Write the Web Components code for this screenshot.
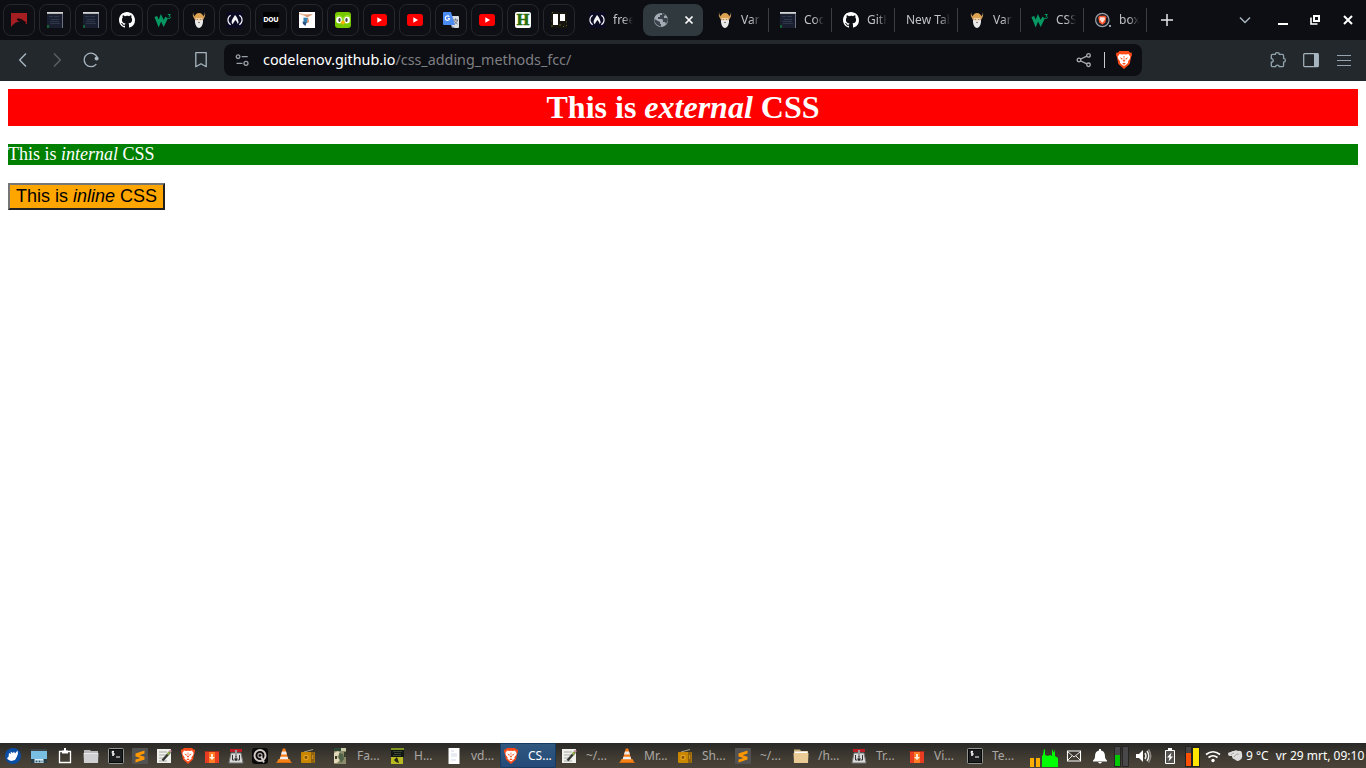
<!DOCTYPE html>
<html lang="en">
<head>
<meta charset="utf-8">
<title>CSS adding methods</title>
<style>html,body{margin:0;height:100%;overflow:hidden;background:#fff}</style>
</head>
<body>
<desktop-screen></desktop-screen>
<script>
const terminal = '<rect x=".5" y=".5" width="15" height="15" rx="1" fill="#1b1d1e" stroke="#909492"/><rect x="1.5" y="1.5" width="13" height="13" fill="none" stroke="#060707"/><path d="M6 3.5H4.2V5.2H6V7H4M5 2.8V8M8 9h4" stroke="#fff" fill="none"/>';
const shield = '<path d="M4 0h8l1.5 1.6 1.4-.2L15 4l-.6 1L13 11.5 8 16 3 11.500 1.600 5 1 4l.1-2.600 1.400.2z" fill="#fb4b19"/><path d="M4.100 2.600l2.200.5L8 2.800l1.700.3 2.200-.5 1.700 2.400-.4 1.900-1.800 2.400.3 1.200L9.800 12.300 8 13.400 6.200 12.300l-1.900-1.800.3-1.200-1.800-2.400L2.400 5z" fill="#fff"/><path d="M4.200 5.600l2.500 1-.4 1.300zM11.800 5.600l-2.500 1 .4 1.300zM7.600 4.500h.8l-.2 3.300 1.100.9-1.300.9-1.300-.9 1.100-.9zM6.300 11.200L8 10.400l1.700.8L8 12.200z" fill="#fb4b19"/>';
const ICONS = {
 flag:'<path d="M0 1h16v11h-1C13.500 9 9 7.800 5.500 7.200L10 6.500C5 6 4.500 8 9 9.500 5 9.500 2 12.500 0 15z" fill="#a41e22"/><path d="M6 7.300l4 .4 5 3.300" stroke="#16080c" stroke-width="1.300" fill="none"/>',
 code:'<path d="M0 0h16v16H0z" fill="#1a1f30"/><path d="M0 .9h16" stroke="#d5d5d5" stroke-width="1.800"/><path d="M15.500 2v14" stroke="#6c7283"/><path d="M2 4.500h4m1 0h5M4 7.500h8M3 9.500h9M3 11.500h10" stroke="#343c52" stroke-width=".8"/><path d="M0 13h2v3H0z" fill="#175d32"/>',
 github:'<path fill="#fff" d="M8 0C3.58 0 0 3.58 0 8c0 3.54 2.29 6.53 5.47 7.59.4.07.55-.17.55-.38 0-.19-.01-.82-.01-1.49-2.01.37-2.53-.49-2.69-.94-.09-.23-.48-.94-.82-1.13-.28-.15-.68-.52-.01-.53.63-.01 1.08.58 1.23.82.72 1.21 1.87.87 2.33.66.07-.52.28-.87.51-1.07-1.78-.2-3.64-.89-3.64-3.95 0-.87.31-1.59.82-2.15-.08-.2-.36-1.02.08-2.12 0 0 .67-.21 2.2.82A7.6 7.6 0 018 3.86c.68 0 1.36.09 2 .27 1.53-1.04 2.2-.82 2.2-.82.44 1.1.16 1.92.08 2.12.51.56.82 1.27.82 2.15 0 3.07-1.87 3.75-3.65 3.95.29.25.54.73.54 1.48 0 1.07-.01 1.93-.01 2.2 0 .21.15.46.55.38A8 8 0 0016 8c0-4.42-3.58-8-8-8"/>',
 w3:'<path d="M.8 4.5L3.700 11.500 6 5.800 8.700 11.500 11.600 5.500" fill="none" stroke="#059862" stroke-width="3"/><path d="M12.800 2.500h2.500L14 4.300c2 0 2 2.200.4 2.200l-1.500-.4" fill="none" stroke="#059862"/>',
 goat:'<path d="M2.300 0C2 2.500 3 4 4.500 4.500L4 8 2.600 5.500C1.500 4 1.800 1.500 2.300 0zM13.700 0C14 2.500 13 4 11.500 4.500L12 8l1.400-2.500C14.500 4 14.200 1.500 13.700 0z" fill="#c99a5c"/><path d="M3.500 5Q4.500 1 8 1t4.500 4l-.3 1.500H3.800z" fill="#dda152"/><path d="M4.200 6h7.600v3H4.200z" fill="#f1cfa0"/><path d="M4 8l2.500.5h3L12 8c.3 4-1.500 8-4 8s-4.300-4-4-8z" fill="#e9e9ea"/><path d="M5.800 7.500h1m2.400 0h1M7 10.500h2" stroke="#6d605b" stroke-width=".8"/>',
 fcc:'<path d="M0 0h16v16H0z" fill="#0a0a23"/><path d="M3.700 3.200C0 5.500 0 10.500 3.700 12.800M12.300 3.200C16 5.500 16 10.500 12.300 12.800" fill="none" stroke="#ededf2" stroke-width="1.200"/><path d="M8 3c2 2 3 4 3.700 7.500L10.500 12c0-2-1-3-2.400-4-.6 2-1.600 2-2.300 4.200C3 10 6 6.500 8 3z" fill="#f4f4f7"/>',
 dou:'<path d="M0 0h16v16H0z"/><text x="8" y="10.400" text-anchor="middle" font-family="Inter" font-size="6.800" font-weight="800" fill="#fff">DOU</text>',
 person:'<path d="M0 0h16v16H0z" fill="#fff"/><path d="M1 2l5 .5L14 2l-3 2-3 1.500-2-1.500z" fill="#db9b76"/><path d="M4.500 5.500L9 6l-1 5-3.500-.5z" fill="#3683b5"/><path d="M3.500 9.500l4 1-1 3.500-2.500-2z" fill="#294e7e"/><path d="M9 5l1 5-2 1z" fill="#cf8152"/><path d="M0 1.500l7 1.500" stroke="#efb78d"/>',
 duo:'<rect width="16" height="16" rx="3" fill="#78c800"/><path d="M1 4q4-3 7 2 3-5 7-2v6q-4 4-7 0-3 4-7 0z" fill="#9be32c"/><ellipse cx="4" cy="8" rx="2.800" ry="3.200" fill="#fff"/><ellipse cx="12" cy="8" rx="2.800" ry="3.200" fill="#fff"/><ellipse cx="4.500" cy="8" rx="1.200" ry="1.900" fill="#454545"/><ellipse cx="11.500" cy="8" rx="1.200" ry="1.900" fill="#454545"/><path d="M5.500 10L8 8.500l2.500 1.500L8 13z" fill="#ffb300"/>',
 youtube:'<rect y="2" width="16" height="12" rx="2.700" fill="#f00"/><path d="M6.300 5.200v5.600L11 8z" fill="#fff"/>',
 translate:'<path d="M6 4h9q1 0 1 1v10q0 1-1 1H9z" fill="#d8dce3"/><path d="M9 14l3 2h-3z" fill="#777f91"/><path d="M1 0h7l4 13H1q-1 0-1-1V1q0-1 1-1z" fill="#4b8bf5"/><path d="M6.400 4.700C5.200 3.300 2.300 3.800 2.300 6.300S6.300 9.300 6.600 6.500H4.800" fill="none" stroke="#fff" stroke-width="1.200"/><path d="M10 8h5m-2.500-1.500V8m2 0c-.5 2-2 3.500-3 4m0-3c.5 1.300 1.700 2.400 3 3" stroke="#626b7d" fill="none" stroke-width=".9"/>',
 H:'<rect width="16" height="16" rx="2" fill="#fff"/><text x="8" y="13.300" text-anchor="middle" font-family="Liberation Serif" font-size="16" font-weight="700" fill="#296b0e" stroke="#296b0e" stroke-width=".7">H</text>',
 trello:'<path d="M0 0h16v16H0z" fill="#17150e"/><path d="M1 .5h1m10 14h1m2-1h1M0 9h1m7 4h2m5-3h1M0 14h2" stroke="#55601a"/><rect x="2" y="2" width="5" height="11" fill="#fff"/><rect x="9" y="2" width="5" height="7" fill="#fff"/>',
 globe:'<circle cx="8" cy="8" r="7" fill="#a5abb5"/><path d="M9 1v2L7 3v2H5v2h4l1 1v2h2l1 2 2-4-1-2h-3V4l2-1zM1.500 7L5 9l2 1v2h1v2.500q-5-1-6.500-5z" fill="#3b444b"/>',
 boxbrave:'<circle cx="7.300" cy="8" r="6.700" fill="#171c23" stroke="#9aa1aa" stroke-width="1.200"/><path d="M4.500 3.700h5.600l1.200 1.500-.9 5.300-3.100 2.300-3.100-2.300-.9-5.300z" fill="#fb542b"/><path d="M5.100 5.300h4.400l.5 2.200-2.700 3.400-2.700-3.400z" fill="#fff" opacity=".8"/><path d="M15 13v2" stroke="#9aa1aa" stroke-width="2"/>',
 back:'<path d="M11 1.500L4.700 8 11 14.500" fill="none" stroke="#a6b5bf" stroke-width="1.400"/>',
 next:'<path d="M5 1.500L11.300 8 5 14.500" fill="none" stroke="#596167" stroke-width="1.400"/>',
 reload:'<path d="M13.300 12.100A6.800 6.800 0 1 1 14.400 5.700" fill="none" stroke="#a6b5bf" stroke-width="1.300"/><circle cx="13.600" cy="6.500" r="2" fill="#a6b5bf"/>',
 mark:'<path d="M2.800.7h10.400v14L8 11.700l-5.200 3z" fill="none" stroke="#a6b5bf" stroke-width="1.300" stroke-linejoin="round"/>',
 tune:'<g fill="none" stroke="#9ba0a8" stroke-width="1.300"><circle cx="4.100" cy="4.700" r="1.800"/><path d="M7.700 4.700h6M2.500 11.300h6"/><circle cx="12" cy="11.300" r="2"/></g>',
 share:'<g fill="none" stroke="#adafb3" stroke-width="1.300"><circle cx="3" cy="8" r="1.800"/><circle cx="12.500" cy="3.400" r="1.800"/><circle cx="12.500" cy="12.800" r="1.800"/><path d="M4.800 7l6-2.800M4.800 9l6 2.900"/></g>',
 puzzle:'<path d="M1.300 3.700q0-1.300 1.300-1.300H5.300C5.300 0 9.300 0 9.300 2.400h2.900q1.400 0 1.400 1.400v2.600c2.400 0 2.400 3.700 0 3.700v3.300q0 1.300-1.300 1.300H9.200c0-2.100-3.600-2.100-3.600 0h-3q-1.300 0-1.300-1.300v-3.200c2.600 0 2.600-3.500 0-3.500z" fill="none" stroke="#94a4ae" stroke-width="1.300"/>',
 panel:'<rect x=".7" y="1.700" width="14.600" height="13" rx="1" fill="none" stroke="#a6b5bf" stroke-width="1.200"/><path d="M11 1.500h4.500v13H11z" fill="#a6b5bf"/>',
 menu:'<path d="M1 3.500h14M1 8.500h14M1 13.500h14" stroke="#94a4ae" stroke-width="1.200"/>',
 plus:'<path d="M8 2v12M2 8h12" stroke="#e5e6e7" stroke-width="1.500"/>',
 down:'<path d="M3 5.500l5 5 5-5" fill="none" stroke="#a6b5bf" stroke-width="1.500"/>',
 min:'<path d="M3 12h10" stroke="#fff" stroke-width="2"/>',
 restore:'<path d="M7 4h5v5H7z" fill="none" stroke="#fff" stroke-width="2"/><path d="M4 5.500v6.500h6.500" fill="none" stroke="#fff" stroke-width="1.600"/>',
 close:'<path d="M4 4l8 8M12 4l-8 8" stroke="#fff" stroke-width="2"/>',
 shield, term:terminal,
 mouse:'<circle cx="8" cy="8" r="8" fill="#0a4da5"/><path d="M4 5l2 1-.5-2.500L8 5l1-1.500 1 2 2.500-3 .5 3-1 3-2 3.500-4 1-3-1.500-1-1.500 1.500-1z" fill="#fff"/>',
 desk:'<path d="M0 1h16v3H0z" fill="#3d4347"/><path d="M0 3h16v8H0z" fill="#79bfe1"/><path d="M0 11h16v4H0z" fill="#273b45"/><path d="M3.500 11h9v4h-9z" fill="#d8edf7"/><path d="M4.500 12.500h2v2h-2zm3 0h2v2h-2zm3 0h1v2h-1z" fill="#315c74"/>',
 clip:'<path d="M2.500 3.500h11v11h-11z" fill="none" stroke="#fff" stroke-width="1.300"/><path d="M5 5.500V2.500h2V0h2v2.500h2v3z" fill="#fff"/>',
 folder:'<path d="M1 2h6l1 1h7v11H1z" fill="#b9b9bc"/><path d="M0.500 5h15l-.5 10H1z" fill="#d0d0d3"/><path d="M1 5.500h14" stroke="#e8e8e9"/>',
 beige:'<path d="M1 1.500h6l1 1.500h7v11H1z" fill="#c9ac77"/><path d="M1.500 3.500h13v3h-13z" fill="#fff"/><path d="M0.500 5h15l-.5 10H1z" fill="#ebcb95"/>',
 sublime:'<rect width="16" height="16" rx="1" fill="#525252"/><path d="M3.500 5.500L12.500 2.500v3L7.500 7.300l5 1.500v2.700L3.500 14.500v-3L8.500 10l-5-1.600z" fill="#ff9800"/>',
 note:'<path d="M1 1h14v14H1z" fill="#f1f1ec"/><path d="M3 4h8M3 7h7M3 10h5M3 13h8" stroke="#a7a8a5"/><path d="M6.500 12.500L14 4" stroke="#363834" stroke-width="2.500"/><path d="M11.500 6.500L13.500 4.300" stroke="#9fc247" stroke-width="1.800"/><path d="M13.700 3.700l1.300-1.500" stroke="#c98fa5" stroke-width="2.300"/>',
 red:'<path d="M1 3h14v12H1z" fill="#e93d22"/><path d="M.5 3.500h15" stroke="#a32a1b"/><path d="M5 4h6v11H5z" fill="#ff7d27"/><path d="M8 6v5" stroke="#ffe6d3" stroke-width="2"/><path d="M5 9h6l-3 3z" fill="#fff0dd"/>',
 trans:'<path d="M2 1h12v3H2z" fill="#be1c24"/><path d="M3 5h10l2 10H1z" fill="#dadada" stroke="#777"/><path d="M8 2v7" stroke="#999" stroke-width="2"/><path d="M4.500 7v5h2m5-5v5h-2M8 8v5" fill="none" stroke="#333"/><path d="M6 10.500h4l-2 2.500z" fill="#222"/>',
 Q:'<rect width="16" height="16" rx="3" fill="#090909"/><circle cx="8" cy="7.500" r="5.500" fill="none" stroke="#d1c9c6" stroke-width="2"/><circle cx="8" cy="7.500" r="2" fill="none" stroke="#a69d9a" stroke-width="1.300"/><path d="M9 8.500l3 6" stroke="#d4cdca" stroke-width="1.800"/>',
 vlc:'<path d="M2.500 11h11l2 4H.5z" fill="#f48418"/><path d="M6.800.5h2.400L12.500 12q-4.500 2-9 0z" fill="#fa7b13"/><path d="M5.900 3.500h4.200l.8 3H5.100zM4.400 8.700h7.200l.7 2.600H3.700z" fill="#eee"/><path d="M0.500 14.500h15" stroke="#dc6b07"/>',
 radio:'<path d="M4 4l9-2.500" stroke="#aaa07e"/><rect x="1" y="4" width="14" height="11" rx="1" fill="#c98600"/><path d="M11 4h3.500v11H11z" fill="#8e6210"/><circle cx="6" cy="9.500" r="2.800" fill="#e3a021"/><circle cx="6" cy="9.500" r="1.400" fill="#825507"/><path d="M12.700 7v4" stroke="#d0972a"/>',
 fact:'<path d="M2 0h12v16H2z" fill="#8b8b6a"/><path d="M2 0h7v3H2z" fill="#2e4734"/><path d="M9 0h5v3H9z" fill="#c8cba9"/><path d="M2 5l4-2 2 2-3 4 3 3-3 3H2z" fill="#e3d9b9"/><path d="M7 5l4 1 1 5-3 4-2-5z" fill="#50644a"/><path d="M12 4h2v5h-2zM3 8h2v3H3z" fill="#39402c"/>',
 book:'<path d="M2 0h13v9H2z" fill="#101611"/><path d="M2 1h13" stroke="#a9bf26" stroke-width="1.500"/><path d="M2 9h12v7H2z" fill="#b8ba20"/><path d="M4 3.500h9M5 5.500h7M4 7.500h8" stroke="#405039" stroke-width=".8"/><path d="M8 9l2 6-3-1-2-2" fill="#252812"/>',
 paper:'<path d="M2.500 0h11v16h-11z" fill="#fff"/><path d="M5 3h3M5 6h6M5 8h6M5 12h5" stroke="#c5cee0" stroke-width=".8"/>',
 mail:'<path d="M1.500 3h13v10h-13z" fill="none" stroke="#fff" stroke-width="1.100"/><path d="M2 4l6 5 6-5M2 12l4-4m8 4l-4-4" fill="none" stroke="#fff" stroke-width=".9"/>',
 bell:'<path d="M7 1h2v1.500c3 .5 4 3 4 6 0 2 1 3 2 4v1H1v-1c1-1 2-2 2-4 0-3 1-5.500 4-6z" fill="#fff"/><path d="M6 14h4q-2 3-4 0" fill="#fff"/>',
 volume:'<path d="M0 6h3l4-4v12l-4-4H0z" fill="#fff"/><path d="M9 5q2 3 0 6m2-8q3.500 5 0 10" stroke="#eee" stroke-width="1.500" fill="none"/><path d="M12.500 1.500q4.500 6.500 0 13" stroke="#8c887f" stroke-width="1.500" fill="none"/>',
 battery:'<path d="M3.500 2.500h9v13h-9z" fill="#55534f" stroke="#fff"/><path d="M6 0h4v2H6z" fill="#fff"/><path d="M9.500 4.500L5 9.500h2.500L6.500 13.500 11 8.500H8.500z" fill="#fff"/>',
 wifi:'<path d="M1 6.500q7-5.500 14 0M3.500 9.500q4.500-3.500 9 0" stroke="#fff" stroke-width="1.600" fill="none"/><circle cx="8" cy="12.500" r="1.700" fill="#fff"/>',
 cloud:'<path d="M3 8Q1 8 1 6t3-2q1-1.500 3-1 2-1.500 4 0 4-1 4 3 1 4-2 6-3 2-5-.5Q5 11 5 8z" fill="#dedddb"/><path d="M7 9q2-4 5-3M4 7q1-2 3-2" stroke="#aaa9a5" fill="none"/>'
};
class UiIcon extends HTMLElement {
  connectedCallback(){
    this.attachShadow({mode:'open'}).innerHTML=`<style>:host{display:block;width:16px;height:16px;flex:none}svg{display:block;width:100%;height:100%;overflow:visible}</style><svg viewBox="0 0 16 16">${ICONS[this.getAttribute('name')]}</svg>`;
  }
}
customElements.define('ui-icon',UiIcon);
class PinnedTab extends HTMLElement {
  connectedCallback(){
    this.attachShadow({mode:'open'}).innerHTML=`<style>:host{box-sizing:border-box;display:grid;place-items:center;width:32px;height:32px;flex:none;border:1px solid #24272d;border-radius:8px;background:#0e0f15}</style><slot></slot>`;
  }
}
customElements.define('pinned-tab',PinnedTab);
class BrowserTab extends HTMLElement {
  connectedCallback(){
    const icon=this.getAttribute('icon');
    this.attachShadow({mode:'open'}).innerHTML=`<style>
    :host{box-sizing:border-box;position:relative;display:flex;align-items:center;gap:8px;width:63px;height:32px;flex:none;padding:0 7px 0 12px;font:12px/16px "Noto Sans",sans-serif;color:#c1c2c5}
    :host([line])::before{content:"";position:absolute;left:0;top:4px;width:1px;height:24px;background:#3a3d42}
    span{flex:1;min-width:0;overflow:hidden;white-space:nowrap;-webkit-mask:linear-gradient(90deg,#000 calc(100% - 10px),transparent)}
    :host([active]){width:60px;margin:0 2px 0 3px;padding:0 7px 0 10px;border-radius:8px;background:#30393e;gap:13px}
    :host([active]) span{display:none}</style>${icon?`<ui-icon name="${icon}"></ui-icon>`:''}<span><slot></slot></span>${this.hasAttribute('active')?'<ui-icon name="close" style="width:14px;height:14px"></ui-icon>':''}`;
  }
}
customElements.define('browser-tab',BrowserTab);
class TabStrip extends HTMLElement {
  connectedCallback(){
    const pins=['flag','code','code','github','w3','goat','fcc','dou','person','duo','youtube','youtube','translate','youtube','H','trello'];
    const tabs=[['goat','Var'],['code','Coc'],['github','GitH'],['','New Tab'],['goat','Var'],['w3','CSS'],['boxbrave','box']];
    this.attachShadow({mode:'open'}).innerHTML=`<style>:host{display:flex;align-items:center;height:40px;background:#0d0e13}.pins{display:flex;gap:4px;padding:0 2px 0 3px}.add{margin-left:12px}.controls{display:flex;margin-left:auto;padding-right:10px}.controls ui-icon{margin-left:17px}.controls ui-icon:nth-child(2){margin-left:22px}.controls ui-icon:nth-child(3){margin-left:16px}</style>
    <div class="pins">${pins.map(n=>`<pinned-tab><ui-icon name="${n}"></ui-icon></pinned-tab>`).join('')}</div>
    <browser-tab icon="fcc">free</browser-tab><browser-tab icon="globe" active></browser-tab>${tabs.map((t,i)=>`<browser-tab icon="${t[0]}" ${i?'line':''}>${t[1]}</browser-tab>`).join('')}<browser-tab line style="width:1px;padding:0"></browser-tab><ui-icon class="add" name="plus"></ui-icon>
    <div class="controls"><ui-icon name="down"></ui-icon><ui-icon name="min"></ui-icon><ui-icon name="restore"></ui-icon><ui-icon name="close"></ui-icon></div>`;
  }
}
customElements.define('tab-strip',TabStrip);
class BrowserToolbar extends HTMLElement {
  connectedCallback(){
    this.attachShadow({mode:'open'}).innerHTML=`<style>
    :host{box-sizing:border-box;display:flex;align-items:center;height:41px;padding:0 14px 1px 15px;background:#22282c}
    nav{display:flex;width:209px;gap:18px}nav ui-icon:last-child{margin-left:auto;margin-right:15px}
    .address{box-sizing:border-box;width:918px;height:32px;border-radius:8px;background:#0d0e13;display:flex;align-items:center;padding:0 10px}
    .url{font:14.33px/20px "Noto Sans",sans-serif;margin-left:13px;color:#fff;white-space:nowrap}.url span{color:#7e7f82}
    .share{margin-left:auto}.bar{width:1px;height:16px;background:#cacbcd;margin:0 11px 0 12px}.tools{display:flex;gap:17px;margin-left:auto}
    </style><nav><ui-icon name="back"></ui-icon><ui-icon name="next"></ui-icon><ui-icon name="reload"></ui-icon><ui-icon name="mark"></ui-icon></nav>
    <div class="address"><ui-icon name="tune"></ui-icon><div class="url">codelenov.github.io<span>/css_adding_methods_fcc/</span></div><ui-icon class="share" name="share"></ui-icon><i class="bar"></i><ui-icon name="shield" style="width:18px;height:18px;margin:0 -1px"></ui-icon></div>
    <div class="tools"><ui-icon name="puzzle"></ui-icon><ui-icon name="panel"></ui-icon><ui-icon name="menu"></ui-icon></div>`;
  }
}
customElements.define('browser-toolbar',BrowserToolbar);
class WebContent extends HTMLElement {
  connectedCallback(){
    this.attachShadow({mode:'open'}).innerHTML=`<style>
    :host{display:block;box-sizing:border-box;flex:1;background:#fff;padding:8px;font:16px "Liberation Serif",serif}
    h1{margin:0;background:red;color:#fff;font-size:32px;line-height:37px;text-align:center}
    p{margin:18px 0;background:green;color:#fff;font-size:18px;line-height:21px}
    button{display:block;box-sizing:border-box;width:157px;height:27px;background:orange;color:#000;font:18px "Liberation Sans",sans-serif;padding:1px 6px;border:2px solid;border-color:#767676 #212121 #212121 #767676;white-space:nowrap;line-height:21px}
    </style><h1>This is <em>external</em> CSS</h1><p>This is <em>internal</em> CSS</p><button>This is <em>inline</em> CSS</button>`;
  }
}
customElements.define('web-content',WebContent);
class TaskButton extends HTMLElement {
  connectedCallback(){
    this.attachShadow({mode:'open'}).innerHTML=`<style>:host{box-sizing:border-box;display:flex;align-items:center;gap:9px;width:58px;height:25px;padding-left:3px;font:12px/18px "Noto Sans",sans-serif;color:#aaa8a4;white-space:nowrap}
    :host([active]){color:#fff;background:linear-gradient(#31587f,#234a78);border-radius:2px;width:56px;margin-right:2px;box-shadow:inset 0 0 0 1px #173a61}</style><ui-icon name="${this.getAttribute('icon')}"></ui-icon><slot></slot>`;
  }
}
customElements.define('task-button',TaskButton);
class SystemTray extends HTMLElement {
  connectedCallback(){
    this.attachShadow({mode:'open'}).innerHTML=`<style>:host{display:flex;align-items:center;width:336px;height:25px;font:12px/18px "Noto Sans",sans-serif;color:#fff;white-space:nowrap}.graph{width:28px;height:20px;margin-top:4px}.meter{width:15px;height:21px;margin-top:1px}svg{display:block;flex:none}</style>
    <svg class="graph" viewBox="0 0 28 20"><path d="M0 10h4v9H0zm6 0h4v9H6z" fill="#ffae00"/><path d="M12 19V8l1-1 1-6 1 1v5l3 1 2-1 2 1V1l2 4 1-4v7l3 2v9z" fill="#0f0"/></svg>
    <ui-icon name="mail" style="margin-left:8px"></ui-icon><ui-icon name="bell" style="margin-left:10px"></ui-icon>
    <svg class="meter" style="margin-left:6px" viewBox="0 0 15 21"><path d="M.5.500h6v20h-6zm8 0h6v20h-6z" fill="#48484a" stroke="#252525"/><path d="M1 9h5v11H1z" fill="#00c800"/></svg>
    <ui-icon name="volume" style="margin-left:7px"></ui-icon><ui-icon name="battery" style="margin-left:10px"></ui-icon>
    <svg class="meter" style="margin-left:7px" viewBox="0 0 15 21"><path d="M0 0h15v21H0z" fill="#222"/><path d="M1 1h5v19H1z" fill="#454545"/><path d="M1 7h5v13H1z" fill="#ff5000"/><path d="M8 2h6v18H8z" fill="#ffe600"/></svg>
    <ui-icon name="wifi" style="margin-left:5px"></ui-icon><ui-icon name="cloud" style="margin-left:6px"></ui-icon><span style="margin-left:3px">9 °C</span><span style="margin-left:7px">vr 29 mrt, 09:10</span>`;
  }
}
customElements.define('system-tray',SystemTray);
class TaskBar extends HTMLElement {
  connectedCallback(){
    const launch=['mouse','desk','clip','folder','term','sublime','note','shield','red','trans','Q','vlc','radio'];
    const tasks=[['fact','Fa...'],['book','H...'],['paper','vd...'],['shield','CS...'],['note','~/...'],['vlc','Mr...'],['radio','Sh...'],['sublime','~/...'],['beige','/h...'],['trans','Tr...'],['red','Vi...'],['term','Te...']];
    this.attachShadow({mode:'open'}).innerHTML=`<style>:host{display:flex;height:25px;overflow:hidden;background:linear-gradient(#292826,#413c33 60%,#4a4338)}.launch{display:flex;align-items:center;gap:8px;padding-left:5px;width:321px}.launch ui-icon:nth-child(-n+3){margin-right:2px}.launch ui-icon:nth-child(4){margin-right:1px}.tasks{display:flex}system-tray{margin-left:auto}</style>
    <div class="launch">${launch.map(n=>`<ui-icon name="${n}"></ui-icon>`).join('')}</div><div class="tasks">${tasks.map((t,i)=>`<task-button icon="${t[0]}" ${i==3?'active':''} ${i==0?'style="padding-left:6px"':i==1?'style="padding-left:5px"':i==2?'style="padding-left:4px"':''}>${t[1]}</task-button>`).join('')}</div><system-tray></system-tray>`;
  }
}
customElements.define('task-bar',TaskBar);
class DesktopScreen extends HTMLElement {
  connectedCallback(){this.attachShadow({mode:'open'}).innerHTML='<style>:host{display:flex;flex-direction:column;width:1366px;height:768px;overflow:hidden}</style><tab-strip></tab-strip><browser-toolbar></browser-toolbar><web-content></web-content><task-bar></task-bar>'}
}
customElements.define('desktop-screen',DesktopScreen);
</script>
</body>
</html>
